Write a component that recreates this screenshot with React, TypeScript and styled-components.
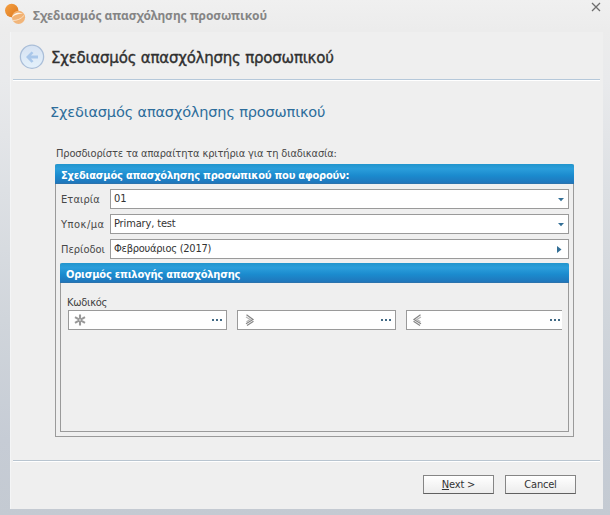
import React from "react";
import styled, { createGlobalStyle } from "styled-components";

const GlobalStyle = createGlobalStyle`
  *, *::before, *::after { box-sizing: border-box; }
  body { margin: 0; font-family: "DejaVu Sans Condensed", "DejaVu Sans", sans-serif; font-size: 11px; color: #333; }
`;

const Window = styled.div`
  width: 610px;
  height: 515px;
  display: flex;
  flex-direction: column;
  overflow: hidden;
  padding: 0 7px 6px 10px;
  background: linear-gradient(180deg, #f0f0f0 0, #ececec 30px, #e9eaec 80px, #dde0e4 190px, #d0d5db 320px, #c6ccd5 440px, #c4cad2 515px);
`;

const TitleBar = styled.header`
  height: 32px;
  flex: none;
  display: flex;
  align-items: flex-start;
  margin-left: -6px;
`;

const Logo = styled.svg`
  width: 22px;
  height: 22px;
  margin-top: 3px;
  flex: none;
`;

const Caption = styled.div`
  margin: 7px 0 0 7px;
  flex: 1;
  white-space: nowrap;
  font: 700 12px/18px "Noto Sans", sans-serif;
  letter-spacing: -0.07px;
  color: #858585;
`;

const CloseButton = styled.button`
  width: 10px;
  height: 10px;
  margin: 2px 2px 0 0;
  padding: 0;
  border: 0;
  background: none;
  svg { display: block; }
`;

const Content = styled.main`
  flex: 1;
  min-height: 0;
  display: flex;
  flex-direction: column;
  background: #efefef;
  border-left: 1px solid #f4f5f6;
  padding: 0 3px 0 2px;
`;

const PageHeader = styled.div`
  height: 49px;
  flex: none;
  display: flex;
  align-items: flex-start;
  padding: 12px 0 0 6px;
  border-bottom: 1px solid #fff;
  box-shadow: inset 0 -1px 0 #b5c8da;
`;

const BackButton = styled.button`
  width: 26px;
  height: 26px;
  padding: 0;
  border: 0;
  background: none;
  svg { display: block; }
`;

const Heading = styled.h1`
  margin: 4px 0 0 6px;
  white-space: nowrap;
  font: 400 15px/20px "DejaVu Sans", sans-serif;
  letter-spacing: -0.22px;
  color: #303030;
  -webkit-text-stroke: 0.35px #303030;
`;

const Body = styled.section`
  flex: 1;
  min-height: 0;
  display: flex;
  flex-direction: column;
  padding: 0 26px 0 42px;
`;

const StepTitle = styled.h2`
  margin: 20px 0 0 -5px;
  white-space: nowrap;
  font: 400 14.500px/22px "DejaVu Sans", sans-serif;
  letter-spacing: -0.15px;
  color: #2d6d9b;
`;

const Hint = styled.p`
  margin: 23px 0 0 1px;
  line-height: 16px;
  height: 18px;
  white-space: nowrap;
  letter-spacing: -0.15px;
  color: #484848;
`;

const Group = styled.section<{ $height: number }>`
  height: ${(p) => p.$height}px;
  flex: none;
  border: 1px solid #9a9a9a;
  border-top: 0;
  border-radius: 2px 2px 0 0;
`;

const GroupTitle = styled.h3`
  height: 20px;
  margin: 0 -1px;
  padding: 3px 0 0 6px;
  font: 700 11px/17px "DejaVu Sans Condensed", "DejaVu Sans", sans-serif;
  letter-spacing: -0.21px;
  white-space: nowrap;
  color: #fff;
  border-radius: 2px 2px 0 0;
  border-bottom: 1px solid #2b73ad;
  background: linear-gradient(180deg, #2195cd 0, #2b9edb 25%, #1b8bce 60%, #2076bb 100%);
`;

const Fields = styled.div`
  display: flex;
  flex-direction: column;
  gap: 5px;
  padding: 5px 4px 4px 5px;
`;

const Row = styled.label`
  display: flex;
  height: 20px;
  line-height: 20px;
`;

const Label = styled.span<{ $spacing?: number }>`
  width: 49px;
  flex: none;
  padding-top: 1px;
  white-space: nowrap;
  color: #484848;
  letter-spacing: ${(p) => p.$spacing ?? 0}px;
`;

const Control = styled.span`
  flex: 1;
  display: flex;
  align-items: center;
  justify-content: space-between;
  padding: 0 3px;
  border: 1px solid #9a9a9a;
  background: #fff;
  line-height: 18px;
  svg { flex: none; }
`;

const Value = styled.span<{ $spacing?: number }>`
  white-space: nowrap;
  letter-spacing: ${(p) => p.$spacing ?? 0}px;
`;

const Inset = styled.div`
  padding: 0 4px 0 4px;
`;

const CodeArea = styled.div`
  padding: 11px 0 0 7px;
`;

const CodeLabel = styled.div`
  height: 16px;
  margin-left: -1px;
  line-height: 17px;
  letter-spacing: -0.25px;
  color: #404040;
`;

const CodeRow = styled.div`
  display: flex;
  gap: 10px;
`;

const CodeField = styled.div<{ $clipped?: boolean }>`
  width: ${(p) => (p.$clipped ? 156 : 159)}px;
  height: 20px;
  display: flex;
  align-items: center;
  justify-content: space-between;
  padding: 0 ${(p) => (p.$clipped ? 1 : 3)}px 0 5px;
  border: 1px solid #9a9a9a;
  border-right-width: ${(p) => (p.$clipped ? 0 : 1)}px;
  background: #fff;
  svg { flex: none; }
`;

const Footer = styled.footer`
  height: 49px;
  flex: none;
  display: flex;
  gap: 11px;
  justify-content: flex-end;
  padding: 14px 24px 0 0;
  border-top: 1px solid #b9c5d0;
  box-shadow: inset 0 1px 0 #fff;
`;

const Button = styled.button`
  width: 71px;
  height: 19px;
  padding: 0;
  border: 1px solid #858585;
  border-bottom-color: #606060;
  background: linear-gradient(#fff, #ececec);
  font: 11px/16px "DejaVu Sans Condensed", "DejaVu Sans", sans-serif;
  letter-spacing: -0.2px;
  color: #333;
`;

const DownArrow = () => (
  <svg width="8" height="5" viewBox="0 0 8 5"><path d="M1 1h6L4 4.300z" fill="#336f96" /></svg>
);

const RightArrow = () => (
  <svg width="9" height="9" viewBox="0 0 9 9"><path d="M1 1l4.500 3.500L1 8z" fill="#336f96" /></svg>
);

const Dots = () => (
  <svg width="12" height="4" viewBox="0 0 12 4" fill="#426a85">
    <path d="M1 1h2v2H1zM5 1h2v2H5zM9 1h2v2H9z" />
  </svg>
);

const Star = () => (
  <svg width="12" height="12" viewBox="0 0 12 12" stroke="#999" strokeWidth="2.100" fill="none">
    <path d="M6 .5v11M1 3.200l10 5.600M11 3.200L1 8.800" />
    <circle cx="6" cy="6" r=".8" fill="#fff" stroke="none" />
  </svg>
);

const Compare = ({ less }: { less?: boolean }) => (
  <svg width="12" height="14" viewBox="0 0 12 14" fill="none" stroke="#858585" strokeWidth="1.200">
    <g transform={less ? "translate(12 0) scale(-1 1)" : undefined}>
      <path d="M3.500 1.800L10 6.500L3 10.700" />
      <path d="M3 4l4.200 2.500L3.500 8.800" stroke="#b5b5b5" />
      <path d="M4 12.500L10.500 8.300" />
    </g>
  </svg>
);

export default function App() {
  return (
    <>
      <GlobalStyle />
      <Window>
        <TitleBar>
          <Logo viewBox="0 0 22 22">
            <defs>
              <linearGradient id="orange" x1="0" y1="0" x2="1" y2="1">
                <stop stopColor="#f5a143" /><stop offset="1" stopColor="#dc771d" />
              </linearGradient>
              <linearGradient id="peach" x1="0" y1="0" x2="0" y2="1">
                <stop stopColor="#f3b06e" /><stop offset="1" stopColor="#f1b67c" />
              </linearGradient>
            </defs>
            <circle cx="7.700" cy="7.500" r="6.700" fill="url(#orange)" />
            <circle cx="14.500" cy="14.300" r="6.600" fill="url(#peach)" />
            <path d="M8 14.500c1-4 6-6 11-4-4 0-8 1-11 4z" fill="#fff5e8" />
            <path d="M9 17.500c4 0 8-1.500 11-5" stroke="#fae0c3" fill="none" />
          </Logo>
          <Caption>Σχεδιασμός απασχόλησης προσωπικού</Caption>
          <CloseButton aria-label="Close">
            <svg width="10" height="10" viewBox="0 0 10 10" stroke="#6e6e6e" strokeWidth="1.300">
              <path d="M1 1l8 8M9 1L1 9" />
            </svg>
          </CloseButton>
        </TitleBar>
        <Content>
          <PageHeader>
            <BackButton aria-label="Back">
              <svg width="26" height="26" viewBox="0 0 26 26">
                <defs>
                  <linearGradient id="disc" x1="0" y1="0" x2="0" y2="1">
                    <stop stopColor="#d6e2f2" /><stop offset="1" stopColor="#e4f1fb" />
                  </linearGradient>
                </defs>
                <circle cx="13" cy="12.700" r="11.600" fill="url(#disc)" stroke="#aabed8" strokeWidth="1.300" />
                <path d="M7 13l5.500-5.500 2 1.500-2.500 2.600h7v3h-7l2.500 2.600-2 1.500z" fill="#a9c7ea" />
              </svg>
            </BackButton>
            <Heading>Σχεδιασμός απασχόλησης προσωπικού</Heading>
          </PageHeader>
          <Body>
            <StepTitle>Σχεδιασμός απασχόλησης προσωπικού</StepTitle>
            <Hint>Προσδιορίστε τα απαραίτητα κριτήρια για τη διαδικασία:</Hint>
            <Group $height={273}>
              <GroupTitle>Σχεδιασμός απασχόλησης προσωπικού που αφορούν:</GroupTitle>
              <Fields>
                <Row><Label $spacing={0.1}>Εταιρία</Label><Control><Value>01</Value><DownArrow /></Control></Row>
                <Row><Label $spacing={0.5}>Υποκ/μα</Label><Control><Value $spacing={-0.15}>Primary, test</Value><DownArrow /></Control></Row>
                <Row><Label>Περίοδοι</Label><Control><Value $spacing={-0.25}>Φεβρουάριος (2017)</Value><RightArrow /></Control></Row>
              </Fields>
              <Inset>
                <Group $height={169}>
                  <GroupTitle>Ορισμός επιλογής απασχόλησης</GroupTitle>
                  <CodeArea>
                    <CodeLabel>Κωδικός</CodeLabel>
                    <CodeRow>
                      <CodeField><Star /><Dots /></CodeField>
                      <CodeField><Compare /><Dots /></CodeField>
                      <CodeField $clipped><Compare less /><Dots /></CodeField>
                    </CodeRow>
                  </CodeArea>
                </Group>
              </Inset>
            </Group>
          </Body>
          <Footer>
            <Button><u>N</u>ext &gt;</Button>
            <Button>Cancel</Button>
          </Footer>
        </Content>
      </Window>
    </>
  );
}
